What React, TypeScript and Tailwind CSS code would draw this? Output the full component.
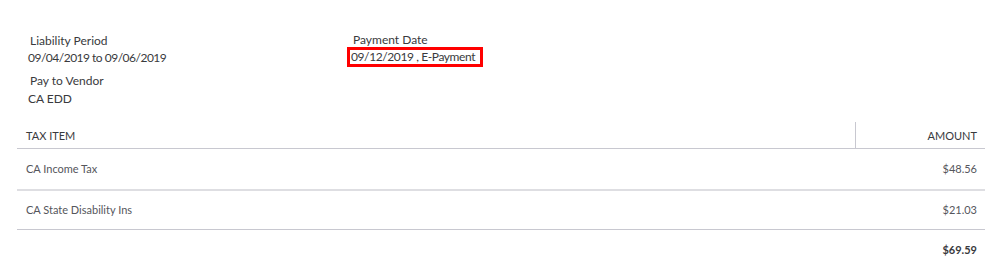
export default function App() {
  return (
    <div className="w-[998px] h-[264px] bg-white overflow-hidden text-[#393a3d]" style={{ fontFamily: "Lato, 'Noto Sans', sans-serif" }}>
      <div className="flex pt-[32px] pl-[28px]">
        <div className="w-[319px]">
          <div className="text-[12px] leading-[17px] pl-[2px]">Liability Period</div>
          <div className="text-[12px] leading-[17px] tracking-[-0.5px]">09/04/2019 to 09/06/2019</div>
          <div className="text-[12px] leading-[17px] pl-[2px] mt-[6px]">Pay to Vendor</div>
          <div className="text-[12px] leading-[17px] mt-[1px]">CA EDD</div>
        </div>
        <div>
          <div className="text-[12px] leading-[15px] pl-[6px]">Payment Date</div>
          <div className="w-fit border-[3px] border-[#ff0000] pl-[1px] pr-[5px] text-[12px] leading-[14px] tracking-[-0.4px]">09/12/2019 , E-Payment</div>
        </div>
      </div>
      <div className="mx-[17px] mt-[15px] w-[968px] text-[11px] text-[#55565c]">
        <div className="flex h-[27px] border-b border-[#c8c8d0]">
          <div className="flex-1 flex items-center pl-[9px] pt-[2px] text-[#393a3d]">TAX ITEM</div>
          <div className="w-[130px] flex items-center justify-end pr-[8px] pt-[2px] border-l border-[#c8c8d0] text-[#393a3d]">AMOUNT</div>
        </div>
        <div className="flex h-[42px] border-b-2 border-[#dedee2]">
          <div className="flex-1 flex items-center pl-[9px]">CA Income Tax</div>
          <div className="flex items-center pr-[8px]">$48.56</div>
        </div>
        <div className="flex h-[39px] border-b border-[#c8c8d0]">
          <div className="flex-1 flex items-center pl-[9px]">CA State Disability Ins</div>
          <div className="flex items-center pr-[8px]">$21.03</div>
        </div>
        <div className="flex h-[40px]">
          <div className="flex-1" />
          <div className="flex items-center pr-[8px] font-bold text-[#393a3d]">$69.59</div>
        </div>
      </div>
    </div>
  );
}
